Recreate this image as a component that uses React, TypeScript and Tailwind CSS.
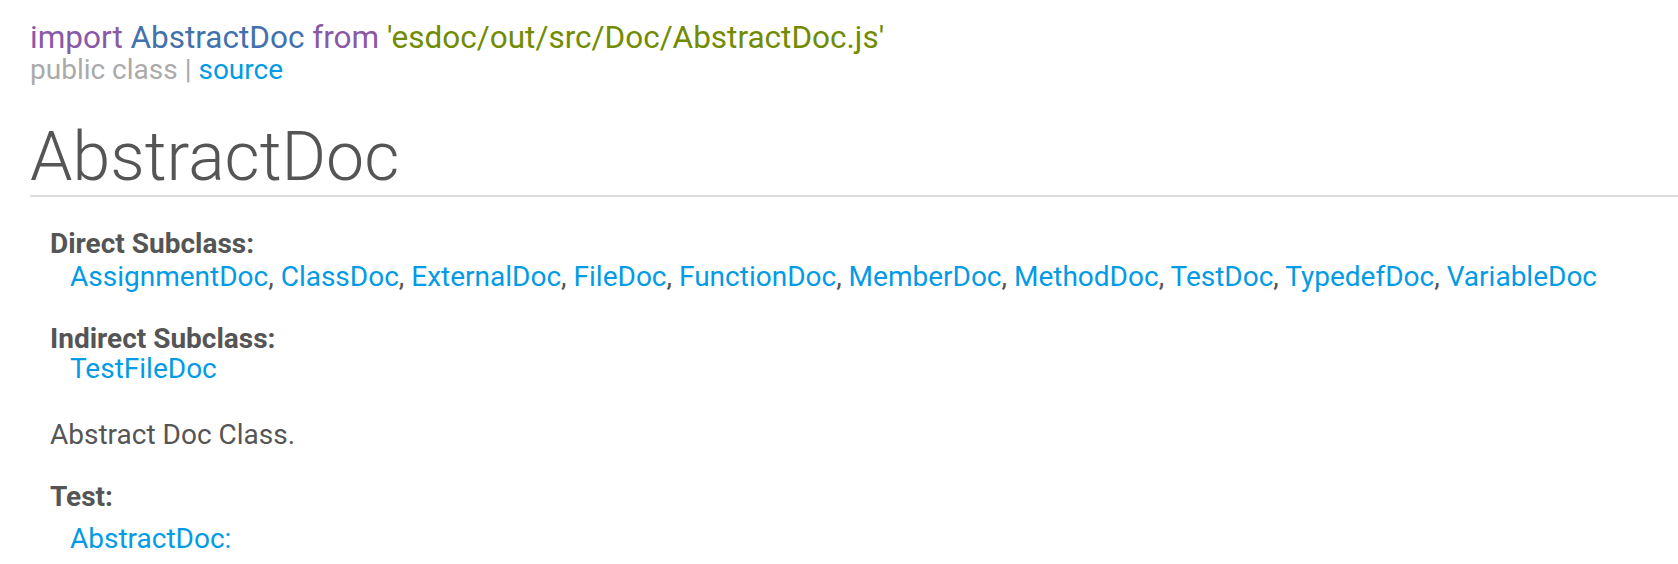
import React from 'react';

const subclasses = [
  'AssignmentDoc',
  'ClassDoc',
  'ExternalDoc',
  'FileDoc',
  'FunctionDoc',
  'MemberDoc',
  'MethodDoc',
  'TestDoc',
  'TypedefDoc',
  'VariableDoc',
];

export default function App() {
  return (
    <div
      className="min-h-screen bg-white pl-[30px] pt-[22px] text-[#555] text-[28px]"
      style={{ fontFamily: 'Roboto, "Noto Sans", sans-serif' }}
    >
      {/* import path */}
      <div className="leading-[32px] text-[31.5px]">
        <span className="text-[#8959a8]">import </span>
        <span className="text-[#4271ae]">AbstractDoc</span>
        <span className="text-[#8959a8]"> from </span>
        <span className="text-[#718c00]">'esdoc/out/src/Doc/AbstractDoc.js'</span>
      </div>
      <div className="leading-[32px] text-[#aaa]">
        public class | <a className="text-[#039be5]">source</a>
      </div>

      {/* Title */}
      <h1 className="mt-[37px] pb-[4px] text-[68px] font-light leading-[68px] border-b-2 border-[#ddd]">
        AbstractDoc
      </h1>

      <div className="ml-[20px] mt-[32px] leading-[30px]">
        <div className="font-bold">Direct Subclass:</div>
        <div className="ml-[20px] mt-[3px]">
          {subclasses.map((name, idx) => (
            <span key={name}>
              <a className="text-[#039be5]">{name}</a>
              {idx < subclasses.length - 1 && ', '}
            </span>
          ))}
        </div>

        <div className="mt-[32px] font-bold">Indirect Subclass:</div>
        <div className="ml-[20px]">
          <a className="text-[#039be5]">TestFileDoc</a>
        </div>

        <p className="mt-[36px]">Abstract Doc Class.</p>

        <div className="mt-[32px] font-bold">Test:</div>
        <div className="ml-[20px] mt-[12px]">
          <a className="text-[#039be5]">AbstractDoc:</a>
        </div>
      </div>
    </div>
  );
}
